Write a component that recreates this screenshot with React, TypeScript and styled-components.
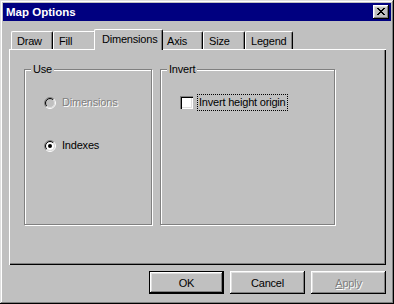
import React from "react";
import styled, { createGlobalStyle, css } from "styled-components";

const GlobalStyle = createGlobalStyle`
  html, body {
    margin: 0;
    padding: 0;
    background: #c0c0c0;
  }
  body {
    font-family: "Liberation Sans", Arial, sans-serif;
    font-size: 11px;
    letter-spacing: -0.2px;
    color: #000;
  }
`;

const Window = styled.div`
  box-sizing: border-box;
  width: 394px;
  height: 304px;
  padding: 3px;
  background: #c0c0c0;
  box-shadow: inset -1px -1px #000, inset 1px 1px #dfdfdf,
    inset -2px -2px #808080, inset 2px 2px #fff;
`;

const TitleBar = styled.div`
  height: 18px;
  display: flex;
  align-items: center;
  justify-content: space-between;
  padding: 0 2px 0 3px;
  background: #000080;
`;

const Title = styled.span`
  color: #fff;
  font-weight: bold;
  font-size: 11.5px;
  letter-spacing: 0;
  line-height: 13px;
`;

const CloseButton = styled.button`
  box-sizing: border-box;
  width: 16px;
  height: 14px;
  padding: 0;
  border: none;
  display: flex;
  align-items: center;
  justify-content: center;
  background: #c0c0c0;
  box-shadow: inset -1px -1px #000, inset 1px 1px #fff,
    inset -2px -2px #808080, inset 2px 2px #dfdfdf;

  svg {
    margin: 0 1px 1px 0;
  }
`;

const Content = styled.div`
  padding: 8px 0 0 6px;
`;

const TabRow = styled.div`
  display: flex;
  align-items: flex-end;
  height: 20px;
  padding-left: 2px;
`;

const Tab = styled.div<{ $w: number; $active?: boolean }>`
  box-sizing: border-box;
  position: relative;
  width: ${(p) => p.$w}px;
  height: 18px;
  padding: 3px 0 0 5px;
  line-height: 13px;
  background: #c0c0c0;
  border-top: 1px solid #fff;
  border-left: 1px solid #fff;
  border-right: 1px solid #000;
  border-radius: 2px 2px 0 0;
  box-shadow: inset -1px 0 #808080;
  white-space: nowrap;

  ${(p) =>
    p.$active &&
    css`
      width: ${p.$w + 4}px;
      height: 21px;
      margin: 0 -2px -1px;
      padding-left: 7px;
      z-index: 1;
    `}
`;

const Panel = styled.div`
  box-sizing: border-box;
  width: 377px;
  height: 216px;
  display: flex;
  align-items: flex-start;
  gap: 8px;
  padding: 14px 0 0 15px;
  background: #c0c0c0;
  box-shadow: inset 1px 1px #fff, inset -1px -1px #000,
    inset -2px -2px #808080;
`;

const Group = styled.fieldset<{ $w: number }>`
  box-sizing: border-box;
  width: ${(p) => p.$w}px;
  height: 162px;
  margin: 0;
  padding: 0;
  min-width: 0;
  border: 1px solid #808080;
  box-shadow: inset 1px 1px #fff, 1px 1px #fff;
`;

const Caption = styled.legend`
  margin-left: 6px;
  padding: 0 2px;
  line-height: 13px;
  background: #c0c0c0;
`;

const GroupBody = styled.div`
  display: flex;
  flex-direction: column;
  gap: 30px;
  padding: 20px 0 0 19px;
`;

const OptionRow = styled.label`
  display: flex;
  align-items: center;
  gap: 6px;
  height: 13px;
  line-height: 13px;
`;

const OptionText = styled.span<{ $disabled?: boolean }>`
  ${(p) =>
    p.$disabled &&
    css`
      color: #808080;
      text-shadow: 1px 1px #fff;
    `}
`;

const CheckRow = styled.label`
  display: flex;
  align-items: center;
  gap: 4px;
  margin-top: -2px;
`;

const CheckBox = styled.span`
  box-sizing: border-box;
  width: 13px;
  height: 13px;
  background: #fff;
  box-shadow: inset 1px 1px #808080, inset 2px 2px #000,
    inset -1px -1px #fff, inset -2px -2px #dfdfdf;
`;

const FocusText = styled.span`
  padding: 1px 1px;
  line-height: 13px;
  border: 1px dotted #000;
`;

const ButtonRow = styled.div`
  width: 377px;
  display: flex;
  justify-content: flex-end;
  gap: 6px;
  margin-top: 6px;
`;

const Button = styled.button<{ $default?: boolean }>`
  box-sizing: border-box;
  width: 75px;
  height: 23px;
  padding: 0;
  border: none;
  font-family: inherit;
  font-size: 11px;
  letter-spacing: inherit;
  color: #000;
  background: #c0c0c0;
  box-shadow: inset -1px -1px #000, inset 1px 1px #fff,
    inset -2px -2px #808080, inset 2px 2px #dfdfdf;

  ${(p) =>
    p.$default &&
    css`
      border: 1px solid #000;
    `}

  &:disabled {
    color: #808080;
    text-shadow: 1px 1px #fff;
  }
`;

const Radio = ({ checked, disabled }: { checked?: boolean; disabled?: boolean }) => {
  const arc = (r: number) => {
    const d = r * 0.7071;
    return [`M${6 - d} ${6 + d} A${r} ${r} 0 0 1 ${6 + d} ${6 - d}`, `M${6 + d} ${6 - d} A${r} ${r} 0 0 1 ${6 - d} ${6 + d}`];
  };
  const [outerTL, outerBR] = arc(5.5);
  const [innerTL, innerBR] = arc(4.5);
  return (
    <svg width="12" height="12" viewBox="0 0 12 12">
      <circle cx="6" cy="6" r="4" fill={disabled ? "#c0c0c0" : "#fff"} />
      <path d={outerTL} stroke="#808080" fill="none" />
      <path d={outerBR} stroke="#fff" fill="none" />
      <path d={innerTL} stroke="#000" fill="none" />
      <path d={innerBR} stroke="#dfdfdf" fill="none" />
      {checked && <circle cx="6" cy="6" r="2" fill="#000" />}
    </svg>
  );
};

const CloseGlyph = () => (
  <svg width="8" height="7" viewBox="0 0 8 7" shapeRendering="crispEdges">
    <path
      fill="#000"
      d="M0 0h2v1h-2z M6 0h2v1h-2z M1 1h2v1h-2z M5 1h2v1h-2z M2 2h4v1h-4z M3 3h2v1h-2z M2 4h4v1h-4z M1 5h2v1h-2z M5 5h2v1h-2z M0 6h2v1h-2z M6 6h2v1h-2z"
    />
  </svg>
);

const tabs = [
  { label: "Draw", w: 42 },
  { label: "Fill", w: 43 },
  { label: "Dimensions", w: 65, active: true },
  { label: "Axis", w: 42 },
  { label: "Size", w: 42 },
  { label: "Legend", w: 48 },
];

const App = () => (
  <>
    <GlobalStyle />
    <Window>
      <TitleBar>
        <Title>Map Options</Title>
        <CloseButton aria-label="Close">
          <CloseGlyph />
        </CloseButton>
      </TitleBar>
      <Content>
        <TabRow>
          {tabs.map((t) => (
            <Tab key={t.label} $w={t.w} $active={t.active}>
              {t.label}
            </Tab>
          ))}
        </TabRow>
        <Panel>
          <Group $w={128}>
            <Caption>Use</Caption>
            <GroupBody>
              <OptionRow>
                <Radio disabled />
                <OptionText $disabled>Dimensions</OptionText>
              </OptionRow>
              <OptionRow>
                <Radio checked />
                <OptionText>Indexes</OptionText>
              </OptionRow>
            </GroupBody>
          </Group>
          <Group $w={175}>
            <Caption>Invert</Caption>
            <GroupBody>
              <CheckRow>
                <CheckBox />
                <FocusText>Invert height origin</FocusText>
              </CheckRow>
            </GroupBody>
          </Group>
        </Panel>
        <ButtonRow>
          <Button $default>OK</Button>
          <Button>Cancel</Button>
          <Button disabled>
            <u>A</u>pply
          </Button>
        </ButtonRow>
      </Content>
    </Window>
  </>
);

export default App;
